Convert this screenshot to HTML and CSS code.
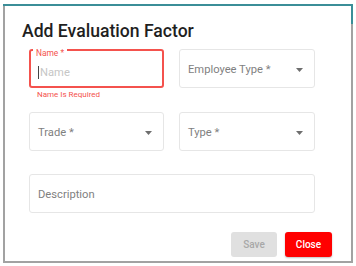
FILE: index.html
```html
<!DOCTYPE html>
<html>
<head>
	<meta charset="utf-8">
	<title>Add Evaluation Factor</title>
	<link rel="stylesheet" href="styles.css">
</head>
<body>
	<div class="frame">
		<div class="dialog">
			<h2 class="dialog__title">Add Evaluation Factor</h2>

			<form class="form">
				<div class="form__row form__row_first">
					<div class="form__group">
						<div class="field field_error">
							<span class="field__label">Name *</span>
							<span class="field__caret"></span>
							<span class="field__placeholder">Name</span>
						</div>
						<div class="field__helper">Name Is Required</div>
					</div>

					<div class="field field_select">
						<span class="field__text">Employee Type *</span>
						<svg class="field__arrow" width="7" height="4" viewBox="0 0 7 4"><path d="M0 0h7L3.5 4z" fill="#6e6e6e"/></svg>
					</div>
				</div>

				<div class="form__row form__row_second">
					<div class="field field_select">
						<span class="field__text">Trade *</span>
						<svg class="field__arrow" width="7" height="4" viewBox="0 0 7 4"><path d="M0 0h7L3.5 4z" fill="#6e6e6e"/></svg>
					</div>
					<div class="field field_select">
						<span class="field__text">Type *</span>
						<svg class="field__arrow" width="7" height="4" viewBox="0 0 7 4"><path d="M0 0h7L3.5 4z" fill="#6e6e6e"/></svg>
					</div>
				</div>

				<div class="field field_wide">
					<span class="field__text">Description</span>
				</div>
			</form>

			<div class="dialog__actions">
				<button class="btn btn_disabled" type="button">Save</button>
				<button class="btn btn_close" type="button">Close</button>
			</div>
		</div>
	</div>
</body>
</html>
```

FILE: styles.css
```css
body {
	margin: 4px 0 0 3px;
	background: #fff;
	font-family: Roboto, "Liberation Sans", sans-serif;
}

.frame {
	width: 350px;
	height: 259px;
	box-sizing: border-box;
	padding: 2px;
	background:
		linear-gradient(#3b8e98, #3b8e98) right top / 2px 20px no-repeat,
		linear-gradient(#3b8e98, #3b8e98) left top / 100% 2px no-repeat,
		#a2a2a2;
}

.dialog {
	height: 100%;
	box-sizing: border-box;
	background: #fff;
	padding: 15px 19px 0 17px;
}
	.dialog__title {
		margin: 0 0 8px;
		font-size: 17.6px;
		line-height: 20px;
		font-weight: 500;
		color: #1f1f1f;
	}

	.dialog__actions {
		display: flex;
		justify-content: flex-end;
		gap: 8px;
		margin-top: 19px;
	}


.form {
	width: 286px;
	margin-left: 7px;
}
	.form__row {
		display: flex;
		align-items: flex-start;
		gap: 15px;
	}
	.form__row_first { margin-bottom: 12px; }
	.form__row_second { margin-bottom: 23px; }

	.form__group {
		width: 135px;
	}


.field {
	position: relative;
	display: flex;
	align-items: center;
	width: 136px;
	height: 39px;
	box-sizing: border-box;
	padding: 2px 11px 0 8px;
	border: 1px solid #e6e6e6;
	border-radius: 3px;
	font-size: 11.2px;
	line-height: 13px;
	color: #7f7f7f;
}
	.form__group .field,
	.form__row_second .field:first-child { width: 135px; }

	.field_wide { width: 286px; }

	.field__arrow {
		margin-left: auto;
		flex: none;
	}

	.field_error {
		border: 2px solid #f4524d;
		padding-top: 8px;
		padding-left: 7px;
	}
		.field__label {
			position: absolute;
			top: -3px;
			left: 2px;
			padding: 0 3px;
			background: #fff;
			font-size: 8.4px;
			line-height: 10px;
			color: #f4524d;
		}
		.field__caret {
			width: 1px;
			height: 13px;
			background: #444;
			margin-right: 1px;
		}
		.field__placeholder {
			color: #c6c6c6;
		}

	.field__helper {
		margin: 2px 0 0 8px;
		font-size: 8px;
		line-height: 10px;
		color: #f4524d;
	}


.btn {
	height: 25px;
	border: 0;
	border-radius: 3px;
	padding: 0;
	font-family: inherit;
	font-size: 10px;
	font-weight: 500;
}
	.btn_disabled {
		width: 46px;
		background: #e0e0e0;
		color: #a8a8a8;
	}
	.btn_close {
		width: 47px;
		background: #ff0000;
		color: #fff;
		box-shadow: 0 1px 2px rgba(0,0,0,.25);
	}
```
